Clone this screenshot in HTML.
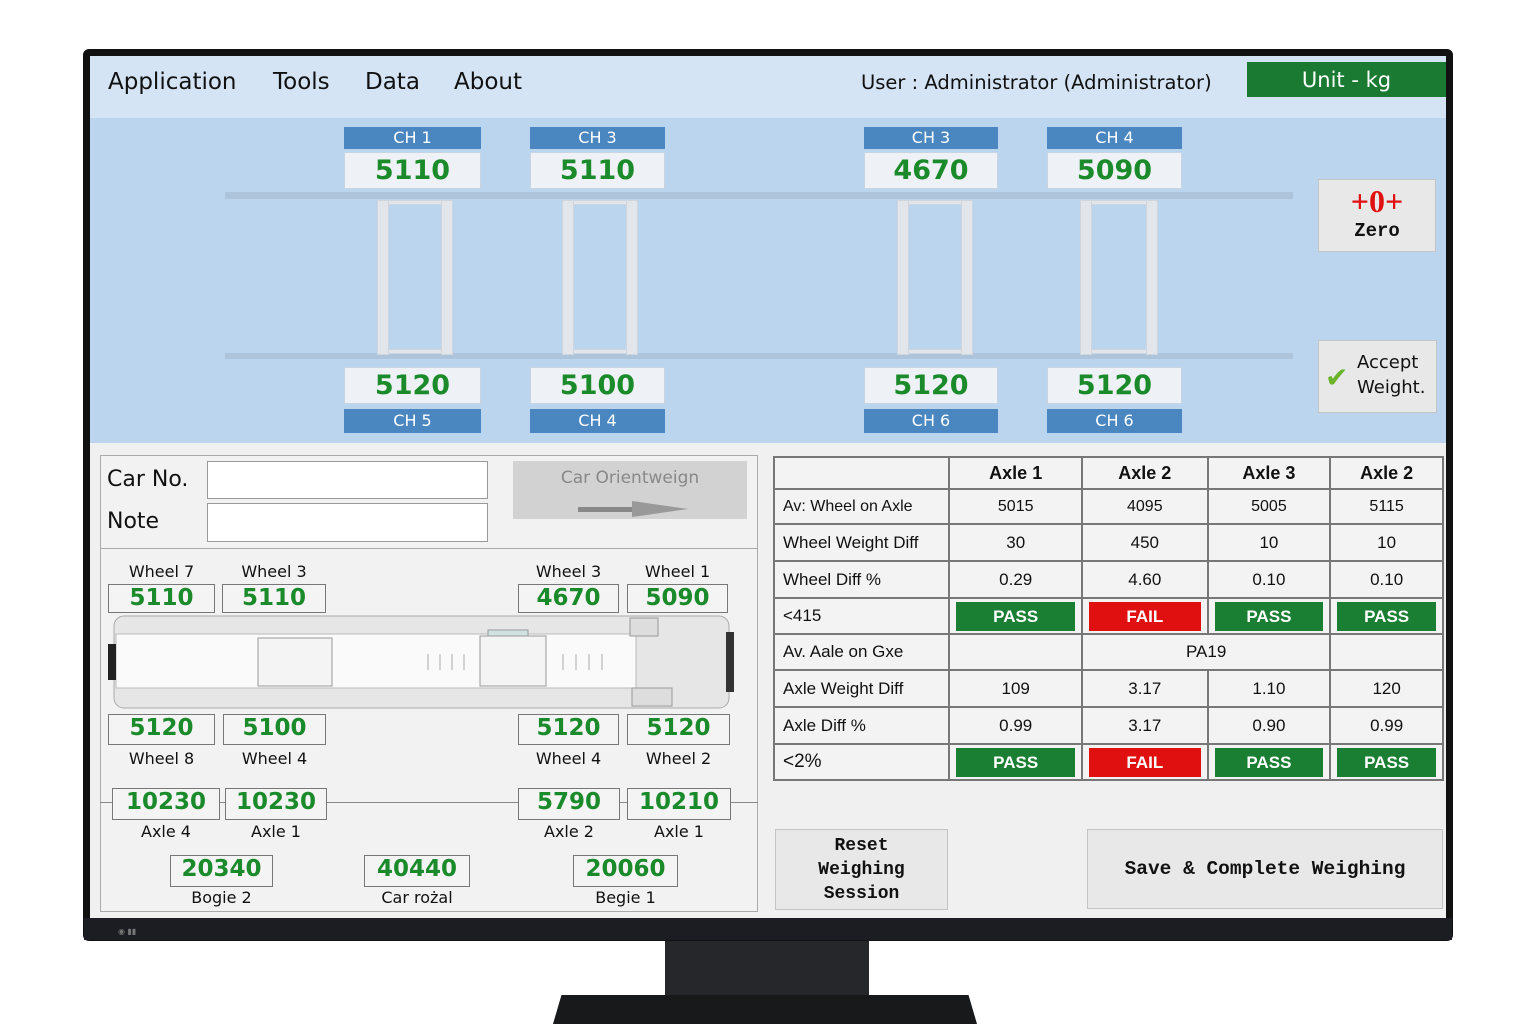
<!DOCTYPE html>
<html><head><meta charset="utf-8"><style>
*{margin:0;padding:0;box-sizing:border-box}
body{width:1536px;height:1024px;background:#fff;position:relative;overflow:hidden;font-family:"DejaVu Sans","Liberation Sans",sans-serif}
.a{position:absolute}
.ch{position:absolute;background:#4a86c0;color:#fff;font-size:16px;text-align:center;line-height:22px;height:22px}
.cv{position:absolute;background:#eef2f6;border:1px solid #c8d4e0;color:#1a8a2a;font-size:27px;font-weight:bold;text-align:center;line-height:35px;height:37px}
.rail{position:absolute;background:#aec4da;}
.post{position:absolute;background:#e2e6ea;border:1px solid #cfd5dc}
.vb{position:absolute;border:1.5px solid #777;background:#f4f4f4;color:#1a8a2a;font-size:23px;font-weight:bold;text-align:center;line-height:26px;height:29px}
.lb{position:absolute;font-size:16px;color:#111;text-align:center}
table{border-collapse:collapse;position:absolute;left:773px;top:456px;font-family:"Liberation Sans",sans-serif}
td{border:2px solid #777;font-size:17px;text-align:center;color:#111;background:#f3f3f3;padding:0}
td.l{text-align:left;padding-left:8px}
.p{display:block;margin:2px 6px;background:#1a7f32;color:#fff;font-weight:bold;line-height:29px;font-size:17px}
.f{background:#e01010}
.btn{position:absolute;background:#e8e8e8;border:1px solid #c4c4c4;font-family:"Liberation Mono",monospace;font-weight:bold;font-size:18px;color:#111;text-align:center}
</style></head><body>
<div class="a" style="left:665px;top:935px;width:204px;height:62px;background:#25272b"></div>
<div class="a" style="left:553px;top:995px;width:424px;height:29px;background:#18191b;clip-path:polygon(2% 0,98% 0,100% 100%,0 100%)"></div>
<div class="a" style="left:83px;top:49px;width:1370px;height:892px;background:#111;border-radius:6px"></div>
<div class="a" style="left:84px;top:918px;width:1368px;height:22px;background:#1b1d22"></div>
<div class="a" style="left:118px;top:927px;width:30px;height:8px;color:#777;font-size:8px">◉ ▮▮</div>
<div class="a" style="left:90px;top:56px;width:1356px;height:862px;background:#f0f0f0"></div>
<div class="a" style="left:90px;top:56px;width:1356px;height:62px;background:#d4e4f4"></div>
<div class="a" style="left:90px;top:118px;width:1356px;height:325px;background:#bcd5ef"></div>
<div class="a" style="left:108px;top:69px;font-size:23px;color:#111">Application</div>
<div class="a" style="left:273px;top:69px;font-size:23px;color:#111">Tools</div>
<div class="a" style="left:365px;top:69px;font-size:23px;color:#111">Data</div>
<div class="a" style="left:454px;top:69px;font-size:23px;color:#111">About</div>
<div class="a" style="left:861px;top:71px;font-size:19.5px;color:#111">User : Administrator (Administrator)</div>
<div class="a" style="left:1247px;top:62px;width:199px;height:35px;background:#1a7a32;color:#fff;font-size:21px;text-align:center;line-height:37px">Unit - kg</div>
<div class="rail" style="left:225px;top:192px;width:1068px;height:7px"></div>
<div class="rail" style="left:225px;top:353px;width:1068px;height:6px"></div>
<div class="post" style="left:377px;top:200px;width:76px;height:5px"></div>
<div class="post" style="left:377px;top:349px;width:76px;height:5px"></div>
<div class="post" style="left:562px;top:200px;width:76px;height:5px"></div>
<div class="post" style="left:562px;top:349px;width:76px;height:5px"></div>
<div class="post" style="left:897px;top:200px;width:76px;height:5px"></div>
<div class="post" style="left:897px;top:349px;width:76px;height:5px"></div>
<div class="post" style="left:1080px;top:200px;width:78px;height:5px"></div>
<div class="post" style="left:1080px;top:349px;width:78px;height:5px"></div>
<div class="post" style="left:377px;top:200px;width:12px;height:155px"></div>
<div class="post" style="left:441px;top:200px;width:12px;height:155px"></div>
<div class="post" style="left:562px;top:200px;width:12px;height:155px"></div>
<div class="post" style="left:626px;top:200px;width:12px;height:155px"></div>
<div class="post" style="left:897px;top:200px;width:12px;height:155px"></div>
<div class="post" style="left:961px;top:200px;width:12px;height:155px"></div>
<div class="post" style="left:1080px;top:200px;width:12px;height:155px"></div>
<div class="post" style="left:1146px;top:200px;width:12px;height:155px"></div>
<div class="ch" style="left:344px;top:127px;width:137px">CH 1</div>
<div class="ch" style="left:530px;top:127px;width:135px">CH 3</div>
<div class="ch" style="left:864px;top:127px;width:134px">CH 3</div>
<div class="ch" style="left:1047px;top:127px;width:135px">CH 4</div>
<div class="cv" style="left:344px;top:152px;width:137px">5110</div>
<div class="cv" style="left:530px;top:152px;width:135px">5110</div>
<div class="cv" style="left:864px;top:152px;width:134px">4670</div>
<div class="cv" style="left:1047px;top:152px;width:135px">5090</div>
<div class="cv" style="left:344px;top:367px;width:137px">5120</div>
<div class="cv" style="left:530px;top:367px;width:135px">5100</div>
<div class="cv" style="left:864px;top:367px;width:134px">5120</div>
<div class="cv" style="left:1047px;top:367px;width:135px">5120</div>
<div class="ch" style="left:344px;top:409px;width:137px;height:24px;line-height:24px">CH 5</div>
<div class="ch" style="left:530px;top:409px;width:135px;height:24px;line-height:24px">CH 4</div>
<div class="ch" style="left:864px;top:409px;width:134px;height:24px;line-height:24px">CH 6</div>
<div class="ch" style="left:1047px;top:409px;width:135px;height:24px;line-height:24px">CH 6</div>
<div class="btn" style="left:1318px;top:179px;width:118px;height:73px">
<div style="color:#e01010;font-family:'Liberation Serif',serif;font-size:32px;line-height:38px;margin-top:2px">+0+</div><div style="font-size:19px">Zero</div></div>
<div class="btn" style="left:1318px;top:340px;width:119px;height:73px;font-family:'DejaVu Sans',sans-serif;font-weight:normal;text-align:left">
<div class="a" style="left:6px;top:20px;color:#6ab42a;font-size:28px;font-weight:bold">✔</div>
<div class="a" style="left:38px;top:9px;font-size:18px;line-height:25px">Accept<br>Weight.</div></div>
<div class="a" style="left:100px;top:455px;width:658px;height:457px;border:1px solid #aaa;background:#f2f2f2"></div>
<div class="a" style="left:100px;top:548px;width:658px;height:1px;background:#aaa"></div>
<div class="a" style="left:107px;top:467px;font-size:22px;color:#111">Car No.</div>
<div class="a" style="left:107px;top:509px;font-size:22px;color:#111">Note</div>
<div class="a" style="left:207px;top:461px;width:281px;height:38px;background:#fff;border:1px solid #999"></div>
<div class="a" style="left:207px;top:503px;width:281px;height:39px;background:#fff;border:1px solid #999"></div>
<div class="a" style="left:513px;top:461px;width:234px;height:58px;background:#d2d2d2;color:#888;font-size:17px;text-align:center;padding-top:7px">Car Orientweign</div>
<div class="a" style="left:578px;top:507px;width:60px;height:5px;background:#888"></div>
<div class="a" style="left:632px;top:501px;width:0;height:0;border-left:56px solid #999;border-top:8px solid transparent;border-bottom:8px solid transparent"></div>
<div class="lb" style="left:108px;top:562px;width:107px">Wheel 7</div>
<div class="lb" style="left:222px;top:562px;width:104px">Wheel 3</div>
<div class="lb" style="left:518px;top:562px;width:101px">Wheel 3</div>
<div class="lb" style="left:627px;top:562px;width:101px">Wheel 1</div>
<div class="vb" style="left:108px;top:584px;width:107px">5110</div>
<div class="vb" style="left:222px;top:584px;width:104px">5110</div>
<div class="vb" style="left:518px;top:584px;width:101px">4670</div>
<div class="vb" style="left:627px;top:584px;width:101px">5090</div>
<svg class="a" style="left:108px;top:614px" width="630" height="96">
<rect x="6" y="2" width="615" height="92" rx="10" fill="#e6e6e6" stroke="#aaa"/>
<rect x="8" y="20" width="520" height="54" fill="#fafafa" stroke="#bbb"/>
<rect x="150" y="24" width="74" height="48" fill="#f4f4f4" stroke="#999"/>
<rect x="372" y="22" width="66" height="50" fill="#f4f4f4" stroke="#999"/>
<rect x="380" y="16" width="40" height="6" fill="#cfe2e0" stroke="#999"/>
<rect x="522" y="4" width="28" height="18" fill="#ddd" stroke="#999"/>
<rect x="524" y="74" width="40" height="18" fill="#ddd" stroke="#999"/>
<rect x="0" y="30" width="8" height="36" fill="#222"/>
<rect x="618" y="18" width="8" height="60" fill="#333"/>
<g stroke="#aaa"><line x1="320" y1="40" x2="320" y2="56"/><line x1="332" y1="40" x2="332" y2="56"/><line x1="344" y1="40" x2="344" y2="56"/><line x1="356" y1="40" x2="356" y2="56"/><line x1="455" y1="40" x2="455" y2="56"/><line x1="468" y1="40" x2="468" y2="56"/><line x1="481" y1="40" x2="481" y2="56"/><line x1="494" y1="40" x2="494" y2="56"/></g>
</svg>
<div class="vb" style="left:108px;top:714px;width:107px;height:31px">5120</div>
<div class="vb" style="left:223px;top:714px;width:103px;height:31px">5100</div>
<div class="vb" style="left:518px;top:714px;width:101px;height:31px">5120</div>
<div class="vb" style="left:627px;top:714px;width:103px;height:31px">5120</div>
<div class="lb" style="left:108px;top:749px;width:107px">Wheel 8</div>
<div class="lb" style="left:223px;top:749px;width:103px">Wheel 4</div>
<div class="lb" style="left:518px;top:749px;width:101px">Wheel 4</div>
<div class="lb" style="left:627px;top:749px;width:103px">Wheel 2</div>
<div class="a" style="left:100px;top:802px;width:658px;height:1px;background:#888"></div>
<div class="vb" style="left:112px;top:788px;width:108px;height:32px">10230</div>
<div class="vb" style="left:225px;top:788px;width:102px;height:32px">10230</div>
<div class="vb" style="left:518px;top:788px;width:102px;height:32px">5790</div>
<div class="vb" style="left:627px;top:788px;width:104px;height:32px">10210</div>
<div class="lb" style="left:112px;top:822px;width:108px">Axle 4</div>
<div class="lb" style="left:225px;top:822px;width:102px">Axle 1</div>
<div class="lb" style="left:518px;top:822px;width:102px">Axle 2</div>
<div class="lb" style="left:627px;top:822px;width:104px">Axle 1</div>
<div class="vb" style="left:170px;top:855px;width:103px;height:32px">20340</div>
<div class="vb" style="left:364px;top:855px;width:106px;height:32px">40440</div>
<div class="vb" style="left:573px;top:855px;width:105px;height:32px">20060</div>
<div class="lb" style="left:170px;top:888px;width:103px">Bogie 2</div>
<div class="lb" style="left:364px;top:888px;width:106px">Car rożal</div>
<div class="lb" style="left:573px;top:888px;width:105px">Begie 1</div>
<table style="width:671px">
<tr style="height:32px"><td style="width:176px"></td><td style="width:133px;font-weight:bold;font-size:18px">Axle 1</td><td style="width:126px;font-weight:bold;font-size:18px">Axle 2</td><td style="width:123px;font-weight:bold;font-size:18px">Axle 3</td><td style="width:113px;font-weight:bold;font-size:18px">Axle 2</td></tr>
<tr style="height:35px"><td class="l" style="font-size:16px">Av: Wheel on Axle</td><td style="font-size:16px">5015</td><td style="font-size:16px">4095</td><td style="font-size:16px">5005</td><td style="font-size:16px">5115</td></tr>
<tr style="height:37px"><td class="l">Wheel Weight Diff</td><td>30</td><td>450</td><td>10</td><td>10</td></tr>
<tr style="height:37px"><td class="l">Wheel Diff %</td><td>0.29</td><td>4.60</td><td>0.10</td><td>0.10</td></tr>
<tr style="height:36px"><td class="l">&lt;415</td><td><span class="p">PASS</span></td><td><span class="p f">FAIL</span></td><td><span class="p">PASS</span></td><td><span class="p">PASS</span></td></tr>
<tr style="height:36px"><td class="l">Av. Aale on Gxe</td><td></td><td colspan="2">PA19</td><td></td></tr>
<tr style="height:37px"><td class="l">Axle Weight Diff</td><td>109</td><td>3.17</td><td>1.10</td><td>120</td></tr>
<tr style="height:37px"><td class="l">Axle Diff %</td><td>0.99</td><td>3.17</td><td>0.90</td><td>0.99</td></tr>
<tr style="height:36px"><td class="l" style="font-size:19px">&lt;2%</td><td><span class="p">PASS</span></td><td><span class="p f">FAIL</span></td><td><span class="p">PASS</span></td><td><span class="p">PASS</span></td></tr>
</table>
<div class="btn" style="left:775px;top:829px;width:173px;height:81px;line-height:24px;padding-top:4px;font-size:18px">Reset<br>Weighing<br>Session</div>
<div class="btn" style="left:1087px;top:829px;width:356px;height:80px;line-height:78px;font-size:19.5px">Save &amp; Complete Weighing</div>
</body></html>
